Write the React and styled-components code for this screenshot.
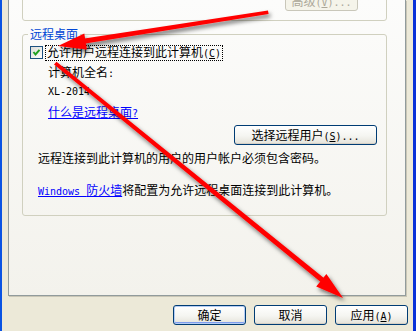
import React from "react";
import styled, { createGlobalStyle, css } from "styled-components";

const GlobalStyle = createGlobalStyle`
  html, body {
    margin: 0;
    padding: 0;
  }
  body {
    background: #ece9d8;
    font-family: "Noto Sans CJK SC", "Noto Sans", sans-serif;
    font-size: 12px;
    color: #000;
  }
`;

const Page = styled.div`
  position: relative;
  width: 416px;
  height: 331px;
  overflow: hidden;
`;

const Window = styled.div`
  display: flex;
  box-sizing: border-box;
  width: 416px;
  height: 331px;
  background: #ece9d8;
  border-left: 2px solid #0a53e3;
  border-right: 3px solid #0831d9;
`;

const Body = styled.div`
  flex: 1;
  display: flex;
  flex-direction: column;
  padding: 0 7px 0 6px;
`;

const Panel = styled.div`
  display: flex;
  flex-direction: column;
  box-sizing: border-box;
  height: 296px;
  padding: 0 18px 0 13px;
  border: 1px solid #919b9c;
  border-top: none;
  background: linear-gradient(#fcfcfb, #f3f2ec);
  box-shadow: 1px 1px 0 #c9c6b6;
`;

const TopGroup = styled.div`
  display: flex;
  align-items: flex-end;
  justify-content: flex-end;
  box-sizing: border-box;
  height: 61px;
  margin-top: -40px;
  padding: 0 28px 9px 0;
  border: 1px solid #d0d0bf;
  border-radius: 3px;
`;

const Group = styled.fieldset`
  margin: 6px 0 0;
  padding: 0;
  min-width: 0;
  border: 1px solid #d0d0bf;
  border-radius: 3px;
`;

const Legend = styled.legend`
  margin-left: 5px;
  padding: 0 2px;
  line-height: 14px;
  color: #0046d5;
`;

const Content = styled.div`
  display: flex;
  flex-direction: column;
  padding: 4px 9px 16px 7px;
`;

const CheckRow = styled.div`
  display: flex;
  align-items: center;
  height: 15px;
`;

const Box = styled.span`
  display: flex;
  box-sizing: border-box;
  width: 13px;
  height: 13px;
  border: 1px solid #1c5180;
  background: linear-gradient(135deg, #dcdcd7, #ffffff);
`;

const Label = styled.span`
  margin-left: 2px;
  padding: 0 1px;
  line-height: 12px;
  border: 1px dotted #000;
  white-space: nowrap;
`;

const Line = styled.div`
  line-height: 18px;
  height: 18px;
  white-space: nowrap;
  padding-left: ${(p) => p.$indent}px;
  margin-top: ${(p) => p.$gap || 0}px;
`;

const Link = styled.span`
  color: #0000ff;
  text-decoration: underline;
`;

const Latin = styled.span`
  font-family: "DejaVu Sans Mono", "Liberation Mono", monospace;
  font-size: 10px;
`;

const Key = styled.span`
  text-decoration: underline;
`;

const ButtonLine = styled.div`
  display: flex;
  justify-content: flex-end;
  margin-top: 4px;
`;

const Button = styled.button`
  box-sizing: border-box;
  width: ${(p) => p.$w || 73}px;
  height: 20px;
  padding: 0;
  border: 1px solid #003c74;
  border-radius: 3px;
  background: linear-gradient(#ffffff 0%, #f5f5f1 55%, #e4e2d9 100%);
  box-shadow: inset 0 -1px 0 #d6d0c5;
  font-family: "Noto Sans CJK SC", "Noto Sans", sans-serif;
  font-size: 12px;
  line-height: 18px;
  color: #000;
  white-space: nowrap;
  ${(p) =>
    p.$default &&
    css`
      box-shadow: inset 0 0 0 1px #b5cdf4, inset 0 -2px 0 #7f9ded;
    `}
  ${(p) =>
    p.disabled &&
    css`
      border-color: #c9c7ba;
      background: #f5f4ea;
      color: #aca899;
      box-shadow: none;
    `}
`;

const Footer = styled.div`
  display: flex;
  justify-content: flex-end;
  gap: 8px;
  margin: 9px -2px 0 0;
`;

const Overlay = styled.svg`
  position: absolute;
  left: 0;
  top: 0;
  pointer-events: none;
`;

const Check = () => (
  <svg width="11" height="11" viewBox="0 0 11 11">
    <path d="M2.5 5 L4.5 7.5 L8.5 2.8" fill="none" stroke="#21a121" strokeWidth="2" />
  </svg>
);

const Arrows = () => (
  <Overlay width="416" height="331" viewBox="0 0 416 331">
    <defs>
      <filter id="shade" x="-20%" y="-20%" width="140%" height="140%">
        <feDropShadow dx="2" dy="3" stdDeviation="2" floodColor="#000" floodOpacity="0.55" />
      </filter>
    </defs>
    <g filter="url(#shade)" fill="#ff0000">
      <polygon points="268,10.5 268.6,14 85.2,43.6 84.4,38.6" />
      <polygon points="58,46 84.3,33.6 86.9,49.4" />
      <polygon points="54,64.5 56.5,61.8 324.2,278.2 321.3,282.6" />
      <polygon points="343,298 316.2,286.5 326.4,274.1" />
    </g>
  </Overlay>
);

export default function App() {
  return (
    <Page>
      <GlobalStyle />
      <Window>
        <Body>
          <Panel>
            <TopGroup>
              <Button disabled>
                高级<Latin>(<Key>V</Key>)...</Latin>
              </Button>
            </TopGroup>
            <Group>
              <Legend>远程桌面</Legend>
              <Content>
                <CheckRow>
                  <Box>
                    <Check />
                  </Box>
                  <Label>
                    允许用户远程连接到此计算机<Latin>(<Key>C</Key>)</Latin>
                  </Label>
                </CheckRow>
                <Line $indent={18} $gap={3}>
                  计算机全名<Latin>:</Latin>
                </Line>
                <Line $indent={18}>
                  <Latin>XL-2014</Latin>
                </Line>
                <Line $indent={18} $gap={4}>
                  <Link>
                    什么是远程桌面<Latin>?</Latin>
                  </Link>
                </Line>
                <ButtonLine>
                  <Button $w={143}>
                    选择远程用户<Latin>(<Key>S</Key>)...</Latin>
                  </Button>
                </ButtonLine>
                <Line $indent={8} $gap={4}>
                  远程连接到此计算机的用户的用户帐户必须包含密码。
                </Line>
                <Line $indent={8} $gap={14}>
                  <Link>
                    <Latin>Windows </Latin>防火墙
                  </Link>
                  将配置为允许远程桌面连接到此计算机。
                </Line>
              </Content>
            </Group>
          </Panel>
          <Footer>
            <Button $default>确定</Button>
            <Button>取消</Button>
            <Button>
              应用<Latin>(<Key>A</Key>)</Latin>
            </Button>
          </Footer>
        </Body>
      </Window>
      <Arrows />
    </Page>
  );
}
